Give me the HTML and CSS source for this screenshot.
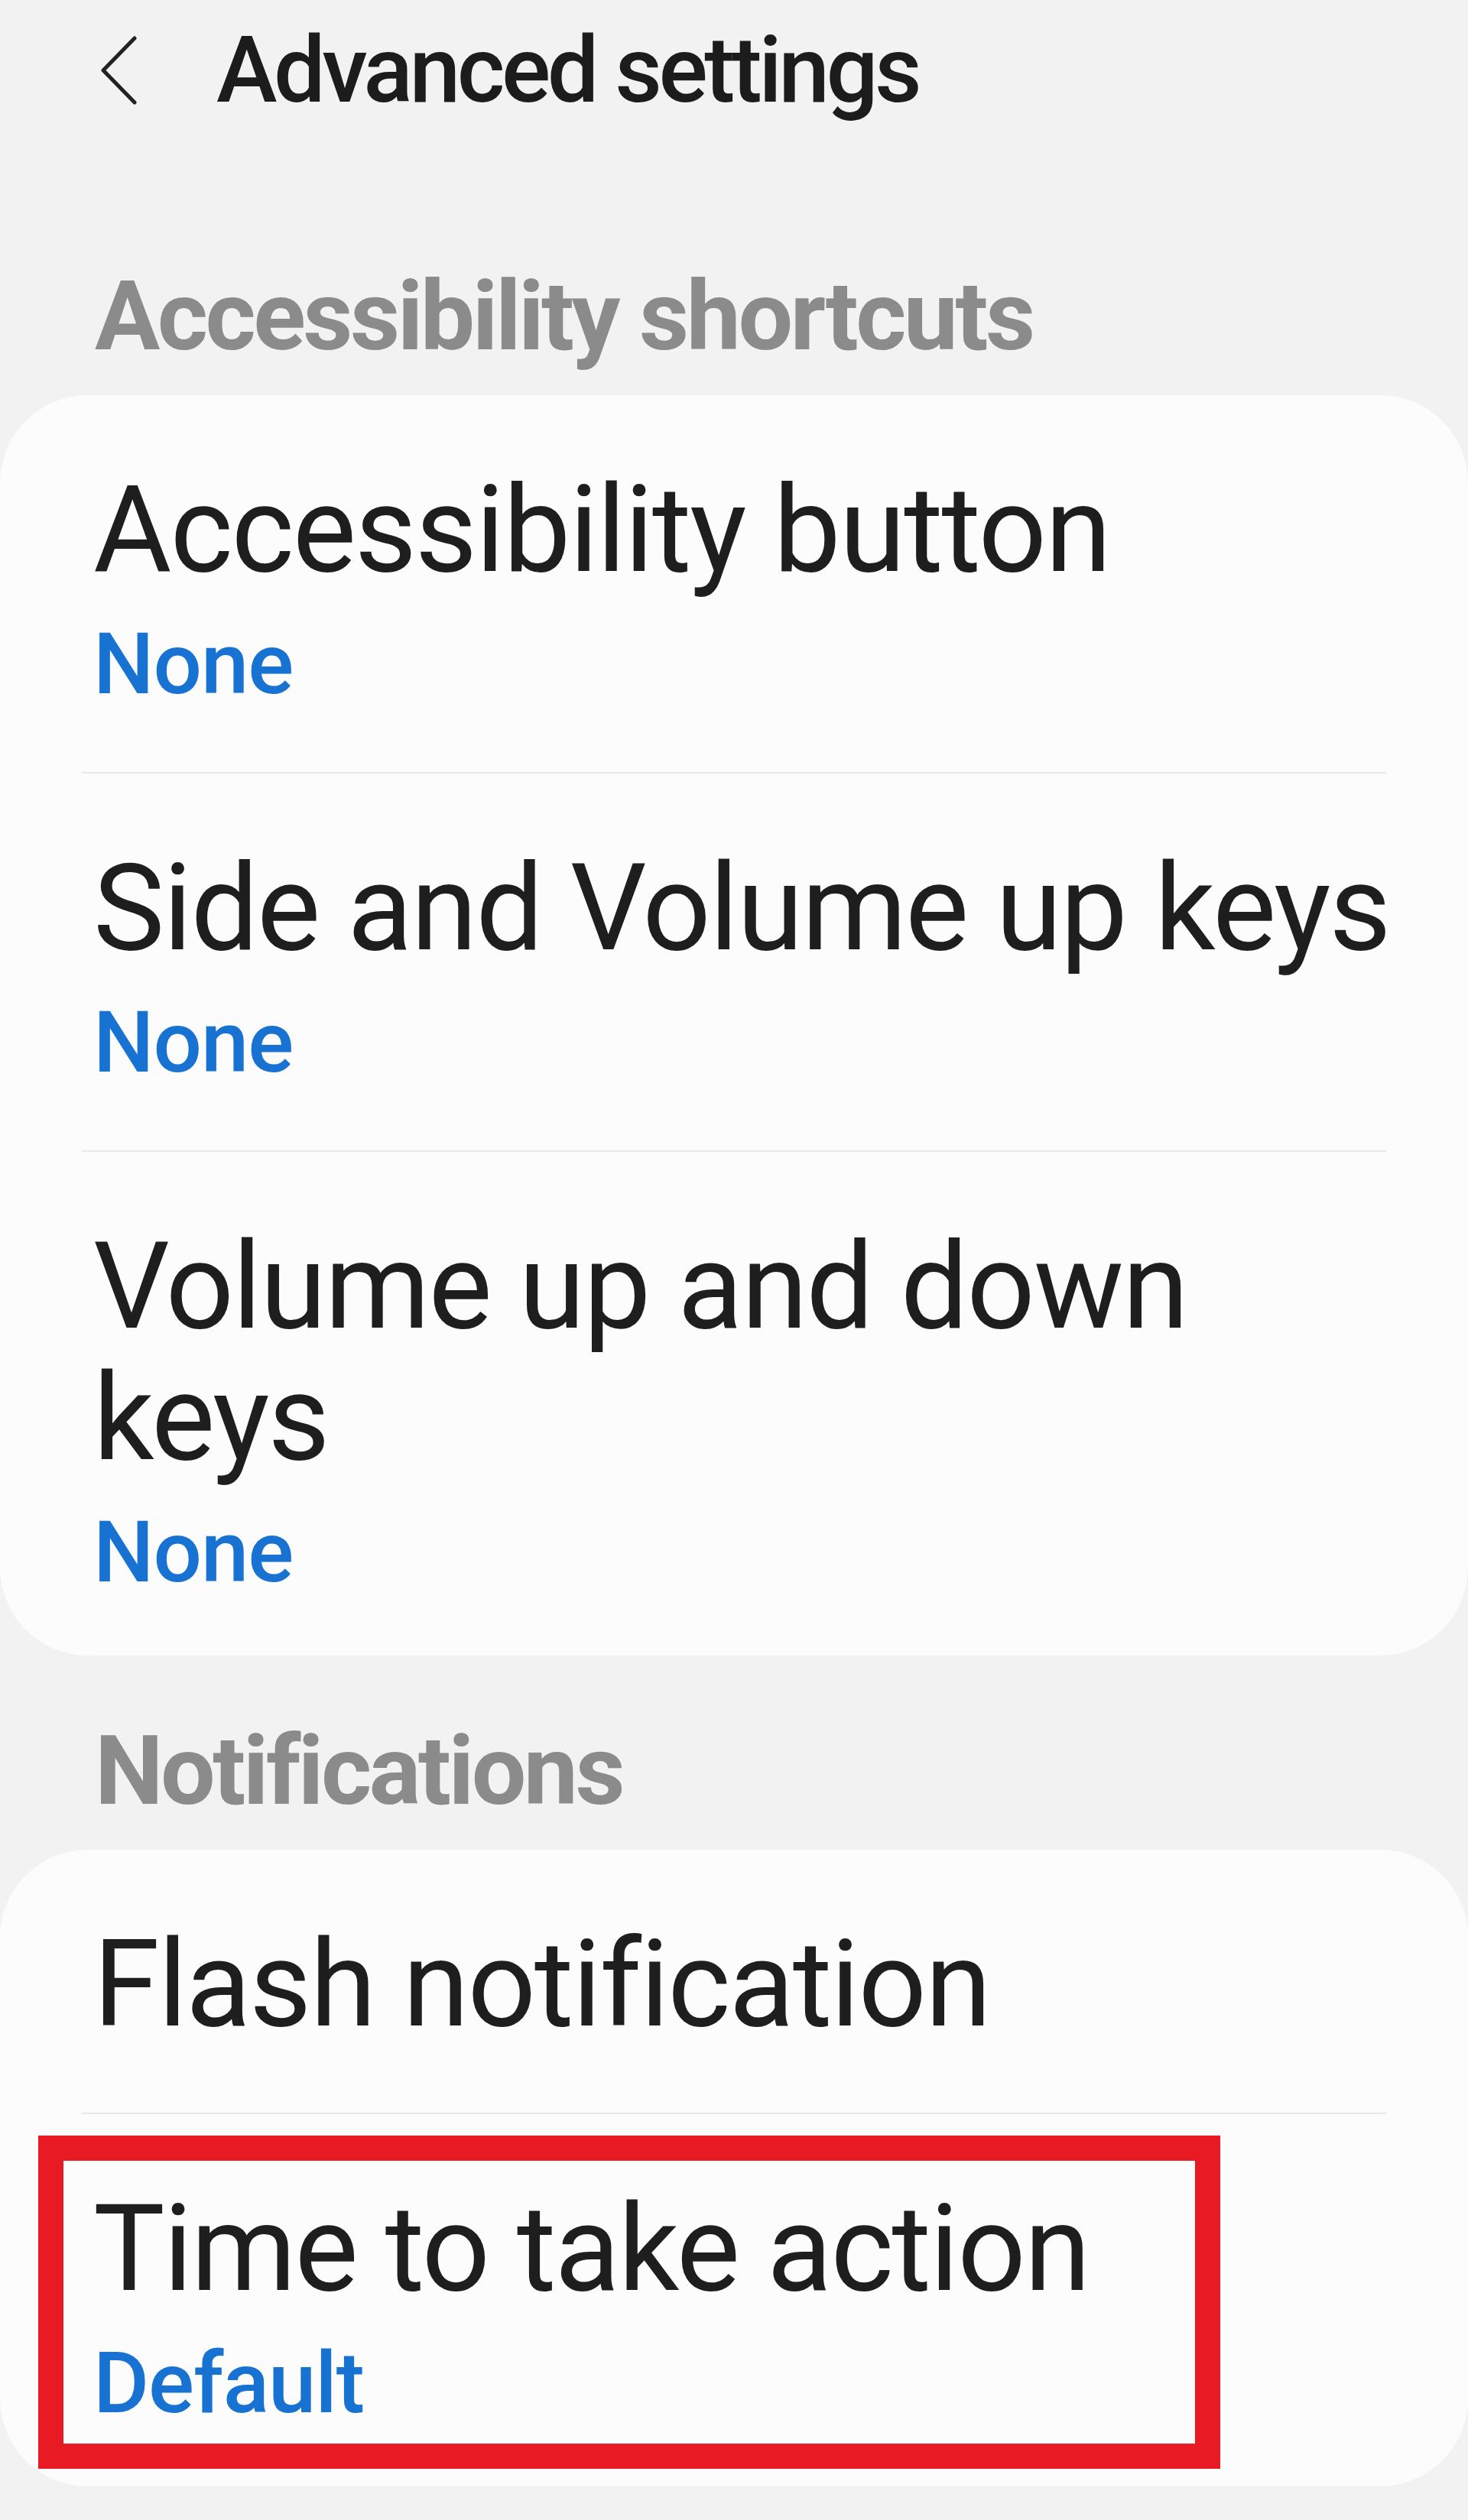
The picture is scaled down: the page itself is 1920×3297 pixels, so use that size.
FILE: index.html
```html
<!DOCTYPE html>
<html lang="en">
<head>
<meta charset="utf-8">
<title>Advanced settings</title>
<link rel="stylesheet" href="styles.css">
</head>
<body>
<div class="screen">
  <header class="appbar">
    <svg class="back" viewBox="0 0 50 90" width="50" height="90" aria-hidden="true">
      <polyline points="46,3 5,45 46,87" fill="none" stroke="#222" stroke-width="5" stroke-linecap="round" stroke-linejoin="round"/>
    </svg>
    <h1 class="appbar-title">Advanced settings</h1>
  </header>

  <h2 class="section-title">Accessibility shortcuts</h2>
  <section class="card">
    <div class="item">
      <div class="item-title">Accessibility button</div>
      <div class="item-sub">None</div>
    </div>
    <div class="item">
      <div class="item-title">Side and Volume up keys</div>
      <div class="item-sub">None</div>
    </div>
    <div class="item item-last">
      <div class="item-title">Volume up and down<br>keys</div>
      <div class="item-sub">None</div>
    </div>
  </section>

  <h2 class="section-title section-title-2">Notifications</h2>
  <section class="card">
    <div class="item item-single">
      <div class="item-title">Flash notification</div>
    </div>
    <div class="item item-last highlighted">
      <div class="item-title">Time to take action</div>
      <div class="item-sub">Default</div>
      <span class="highlight-box" aria-hidden="true"></span>
    </div>
  </section>
</div>
</body>
</html>
```

FILE: styles.css
```css
html, body {
  margin: 0;
  padding: 0;
  background: #f2f2f2;
}

body {
  font-family: Roboto, "Liberation Sans", Arial, sans-serif;
  color: #1e1e1e;
}

.screen {
  width: 1920px;
  min-height: 3297px;
  background: #f2f2f2;
  overflow: hidden;
}

.appbar {
  display: flex;
  align-items: center;
  padding: 22px 0 0 130px;
  height: 140px;
}

.back {
  flex: none;
  display: block;
}

.appbar-title {
  margin: 0 0 0 103px;
  font-size: 120px;
  line-height: 140px;
  font-weight: 500;
  color: #1c1c1c;
  letter-spacing: -4.5px;
  white-space: nowrap;
}

.section-title {
  margin: 0;
  padding: 177px 0 28px 124px;
  font-size: 127px;
  line-height: 150px;
  font-weight: 700;
  color: #8b8b8b;
  letter-spacing: -3.5px;
  white-space: nowrap;
}

.section-title-2 {
  padding-top: 76px;
}

.card {
  background: #fcfcfc;
  border-radius: 115px;
  margin: 0;
}

.item {
  position: relative;
  margin: 0 107px;
  padding: 90px 0 76px 15px;
  border-bottom: 2px solid #e9e9e9;
}

.item-single {
  padding-bottom: 82px;
}

.item-last {
  border-bottom: none;
  padding-bottom: 70px;
}

.item-title {
  font-size: 157px;
  line-height: 172px;
  font-weight: 400;
  color: #1e1e1e;
  letter-spacing: -2px;
  white-space: nowrap;
}

.item-sub {
  margin-top: 25px;
  font-size: 112px;
  line-height: 130px;
  font-weight: 500;
  color: #1872d2;
  letter-spacing: -1px;
}

.highlight-box {
  position: absolute;
  left: -57px;
  top: 28px;
  width: 1546px;
  height: 436px;
  box-sizing: border-box;
  border: 33px solid #e81b24;
  pointer-events: none;
}
```
